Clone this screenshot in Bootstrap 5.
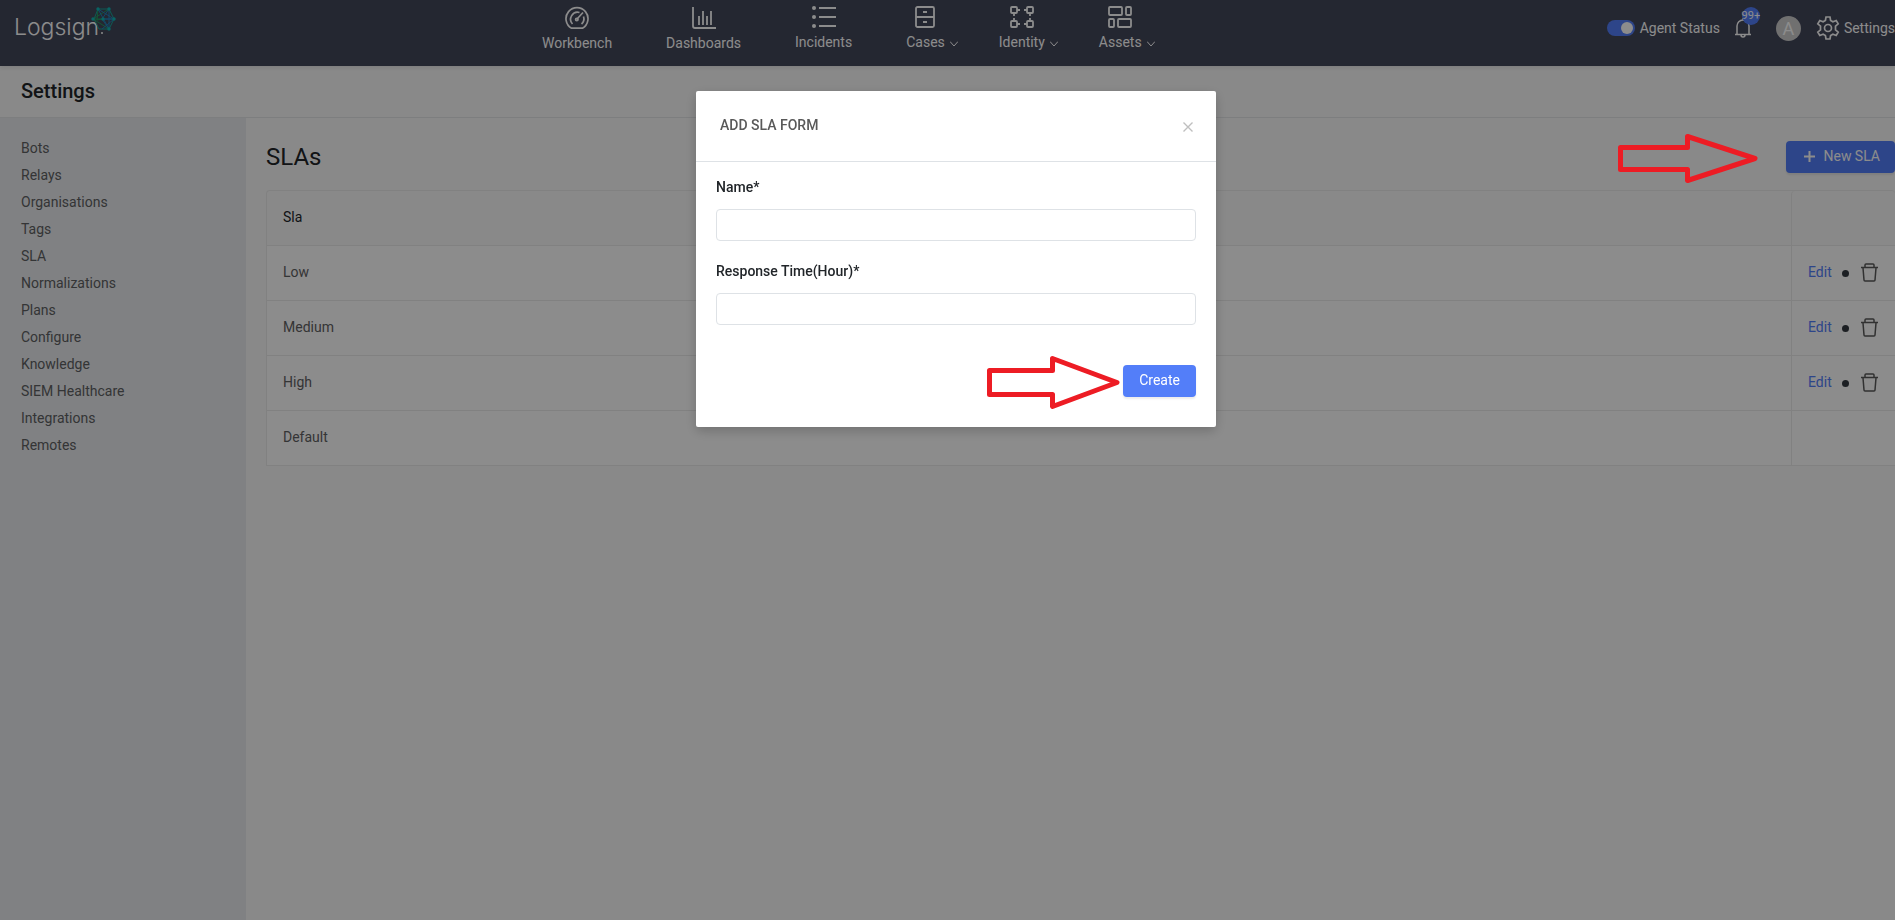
<!DOCTYPE html>
<html lang="en">
<head>
<meta charset="utf-8">
<meta name="viewport" content="width=device-width, initial-scale=1">
<title>Settings - SLAs</title>
<link href="https://cdn.jsdelivr.net/npm/bootstrap@5.3.0/dist/css/bootstrap.min.css" rel="stylesheet">
<style>
body{font-family:Roboto,"Open Sans",sans-serif;font-size:14px;line-height:20px;background:#f9f9f9;color:#212529;overflow-x:hidden}
a{text-decoration:none}
svg{display:block;fill:none;stroke:currentColor;flex-shrink:0}
.topbar{background:#43475a;color:#fff;height:66px;box-shadow:0 2px 4px rgba(0,0,0,.08);position:relative;white-space:nowrap}
.topbar a{color:#fff}
.brand-link{width:118px;padding:4px 0 0 14px}
.wordmark{font-family:Inter,Lato,sans-serif;font-weight:300;font-size:23px;fill:#fff;stroke:none}
.main-menu{padding:4px 0 0 424px;gap:54px}
.menu-item{display:flex;flex-direction:column;align-items:center;gap:4px}
.menu-item .caret{margin:4px -13px 0 5px}
.menu-main{padding-top:2px;gap:3px}
.user-area{margin:15px 0 0 auto;height:26px}
.user-area .form-check-input{width:28px;height:16px;margin:0 5px 0 0;border:0;background-color:#537ef9;box-shadow:none}
.notif{position:relative;margin-left:15px}
.notif-count{position:absolute;left:7px;top:-11px;width:18px;height:18px;border-radius:50%;background:#537ef9;font-size:11px;line-height:18px;display:flex;justify-content:center}
.avatar{width:25px;height:25px;line-height:25px;margin:0 15px 0 25px;background:#ccc;font-size:18px;border-radius:50%;text-align:center}
.title-bar{border-bottom:1px solid #e4e6e8;padding:12px 21px 13px}
.title-bar h1{font-size:20px;line-height:26px;font-weight:500;margin:0}
.shell{min-height:calc(100vh - 118px)}
.side{width:246px;background:#e9ecef;padding:17px 21px}
.side a{color:#5f6163;line-height:27px}
.content{padding:22px 0 0 20px;min-width:0}
.content h2{font-size:24px;line-height:34px;font-weight:400;margin:0}
.btn-blue,.btn-blue:hover{background:#537ef9;color:#fff;border:0;font-size:14px;line-height:20px;height:32px;padding:5px 16px 7px;border-radius:4px;box-shadow:0 2px 2px rgba(0,0,0,.08)}
.btn-blue.new-sla{padding:5px 15px 7px 18px}
.sla-table{margin:16px 0 0;border-collapse:separate;border-spacing:0;border:1px solid #ebebeb;border-width:1px 0 0 1px;border-radius:4px 4px 0 0}
.sla-table>*>tr>*{height:55px;padding:0 16px 2px;font-weight:400;vertical-align:middle;border-bottom:1px solid #ebebeb;color:#5f6163;background:#fff}
.sla-table>thead>tr>*{background:#f9f9f9;color:#212529;border-radius:4px 4px 0 0}
.sla-table>*>tr>.acts{width:104px;border-left:1px solid #ebebeb}
.sla-table .acts a{color:#537ef9}
.sep{width:7px;height:7px;border-radius:50%;background:#343a40;margin:2px 12px 0 10px}
.trash{border:0;background:none;padding:0;color:#5a5a5a}
.modal-backdrop{--bs-backdrop-opacity:.45}
.modal.with-gutter{padding-left:17px}
.modal-dialog{width:520px;max-width:100%;margin-top:91px}
.modal-content{border:0;border-radius:2px;box-shadow:0 4px 12px rgba(0,0,0,.2)}
.modal-header{padding:24px 24px 26px;border-bottom:1px solid #dee2e6;align-items:flex-start}
.modal-title{font-size:14px;line-height:20px;font-weight:500;color:#595959}
.close-x{border:0;background:none;padding:7px 0 0;color:#bfbfbf;margin-right:-1px}
.modal-body{padding:15px 20px 30px}
.modal-body .form-label{font-weight:500;margin:0 0 12px;display:block}
.modal-body .form-control{height:32px;padding:4px 11px;border:1px solid #dee2e6;border-radius:4px;font-size:14px;margin-bottom:20px;box-shadow:none}
.form-actions{padding-top:20px;position:relative}
.pointer{position:absolute;stroke:#ed1c24;stroke-width:5;stroke-linejoin:round;pointer-events:none}
.pointer-create{right:76px;top:10px}
.pointer-new{z-index:1060;right:135px;top:132px}
</style>
</head>
<body>
<svg class="d-none" aria-hidden="true">
  <symbol id="chevron" viewBox="0 0 8 6"><path d="M0 .5 4 5 8 .5" fill="none" stroke="currentColor"/></symbol>
  <symbol id="bin" viewBox="0 0 17 19"><path d="M0 4.500h17M4 4V2q0-1 1-1h7q1 0 1 1v2M2 5l1 12q0 1 1 1h9q1 0 1-1l1-12" fill="none" stroke="currentColor" stroke-width="1.500"/></symbol>
</svg>
<header class="topbar d-flex align-items-start">
  <a href="#" class="brand-link" aria-label="Logsign">
    <svg width="104" height="42" viewBox="0 0 104 42">
      <text class="wordmark" x="0" y="31">Logsign</text>
      <circle cx="88" cy="29" r="1" fill="#fff" stroke="none"/>
      <path d="M84 5h11l5 10-5 10H85l-5-10z" stroke="#18a79b"/>
      <path stroke="#249d62" d="M79 15 95 5M84 5l-1 11 5-1M79 15h9M79 15l16 10"/>
      <path stroke="#2385be" d="M95 5v20M84 5l16 10H88M88 15l12 0M84 5l11 20M95 5 88 15M88 15l7 10M88 25l12-10"/>
      <g fill="#0fb5b5" stroke="none"><circle cx="84" cy="5" r="1.700"/><circle cx="95" cy="5" r="1.700"/><circle cx="100" cy="15" r="1.700"/><circle cx="95" cy="25" r="1.700"/><circle cx="79" cy="15" r="1.700"/><circle cx="89" cy="15" r="1.700"/></g>
    </svg>
  </a>
  <nav class="main-menu d-flex align-items-start" aria-label="Main">
    <a href="#" class="menu-item menu-main"><svg width="24" height="24" viewBox="0 0 24 24" stroke-width="1.700"><path d="M6.500 22.200a11 11 0 1 1 11 0z"/><path d="M7.500 18a7 7 0 0 1 7-11.500M18.500 10.500a7 7 0 0 1-2 7.500M12 13l6-6.500"/><circle cx="11.800" cy="13.500" r="1.200"/></svg><span>Workbench</span></a>
    <a href="#" class="menu-item menu-main"><svg width="24" height="24" viewBox="0 0 24 24" stroke-width="1.800"><path d="M1 1v19q0 2 2 2h21M7 19v-9M11 19V5M15 19v-9M19 19V5"/></svg><span>Dashboards</span></a>
    <a href="#" class="menu-item"><svg width="24" height="24" viewBox="0 0 24 24" stroke-width="2"><path d="M7 4h17M7 13h17M7 22h17"/><g fill="currentColor" stroke="none"><circle cx="2" cy="4" r="2"/><circle cx="2" cy="13" r="2"/><circle cx="2" cy="22" r="2"/></g></svg><span>Incidents</span></a>
    <a href="#" class="menu-item"><svg width="24" height="24" viewBox="0 0 24 24" stroke-width="1.800"><rect x="3" y="3" width="18" height="20" rx="1.500"/><path d="M3 13h18M10 8h4M10 18h4"/></svg><span class="d-flex align-items-center">Cases<svg class="caret" width="8" height="6"><use href="#chevron"/></svg></span></a>
    <a href="#" class="menu-item"><svg width="24" height="24" viewBox="0 0 24 24" stroke-width="1.800"><rect x="1" y="3" width="6" height="6" rx="1"/><rect x="17" y="3" width="6" height="6" rx="1"/><rect x="1" y="17" width="6" height="6" rx="1"/><rect x="17" y="17" width="6" height="6" rx="1"/><path d="M7 6h3M14 6h3M7 20h3M14 20h3M4 9v3M4 14v3M20 9v3M20 14v3"/></svg><span class="d-flex align-items-center">Identity<svg class="caret" width="8" height="6"><use href="#chevron"/></svg></span></a>
    <a href="#" class="menu-item"><svg width="24" height="24" viewBox="0 0 24 24" stroke-width="1.800"><rect x="1" y="3" width="13" height="8" rx="1"/><rect x="18" y="3" width="5" height="8" rx="1"/><rect x="1" y="15" width="5" height="8" rx="1"/><rect x="10" y="15" width="13" height="8" rx="1"/></svg><span class="d-flex align-items-center">Assets<svg class="caret" width="8" height="6"><use href="#chevron"/></svg></span></a>
  </nav>
  <div class="user-area d-flex align-items-center">
    <div class="form-switch d-flex align-items-center p-0">
      <input class="form-check-input" type="checkbox" role="switch" id="agent" checked>
      <label for="agent">Agent Status</label>
    </div>
    <a href="#" class="notif" aria-label="Notifications"><svg width="16" height="20" viewBox="0 0 16 20" stroke-width="1.500"><path d="M0 16.500h16M2 16V8a6 6 0 0 1 12 0v8M6 17q0 2 2 2t2-2M8 0v2"/></svg><span class="notif-count">99+</span></a>
    <span class="avatar">A</span>
    <a href="#" class="d-flex align-items-center"><svg class="me-1" width="24" height="24" viewBox="0 0 24 24" stroke-width="1.700"><path d="M10 1h4l.6 3.400 2.300 1.300 3.300-1.200 2 3.400-2.700 2.300v3.600l2.700 2.300-2 3.400-3.300-1.200-2.300 1.300L14 23h-4l-.6-3.400-2.300-1.300-3.300 1.200-2-3.400 2.700-2.300v-3.600L1.800 7.900l2-3.400 3.300 1.200 2.300-1.300z"/><circle cx="12" cy="12" r="3.500"/></svg>Settings</a>
  </div>
</header>
<div class="title-bar"><h1>Settings</h1></div>
<div class="shell d-flex">
  <nav class="side flex-shrink-0 nav flex-column" aria-label="Settings">
    <a href="#">Bots</a><a href="#">Relays</a><a href="#">Organisations</a><a href="#">Tags</a><a href="#">SLA</a><a href="#">Normalizations</a><a href="#">Plans</a><a href="#">Configure</a><a href="#">Knowledge</a><a href="#">SIEM Healthcare</a><a href="#">Integrations</a><a href="#">Remotes</a>
  </nav>
  <main class="content flex-grow-1">
    <div class="d-flex justify-content-between align-items-center">
      <h2>SLAs</h2>
      <button type="button" class="btn btn-blue new-sla d-flex align-items-center"><svg width="11" height="11" class="me-2" viewBox="0 0 11 11" stroke-width="2"><path d="M5.500 0v11M0 5.500h11"/></svg><span>New SLA</span></button>
    </div>
    <table class="table sla-table">
      <thead><tr><th scope="col">Sla</th><th class="acts"></th></tr></thead>
      <tbody>
        <tr><td>Low</td><td class="acts"><div class="d-flex align-items-center"><a href="#">Edit</a><span class="sep"></span><button type="button" class="trash" aria-label="Delete Low"><svg width="17" height="19"><use href="#bin"/></svg></button></div></td></tr>
        <tr><td>Medium</td><td class="acts"><div class="d-flex align-items-center"><a href="#">Edit</a><span class="sep"></span><button type="button" class="trash" aria-label="Delete Medium"><svg width="17" height="19"><use href="#bin"/></svg></button></div></td></tr>
        <tr><td>High</td><td class="acts"><div class="d-flex align-items-center"><a href="#">Edit</a><span class="sep"></span><button type="button" class="trash" aria-label="Delete High"><svg width="17" height="19"><use href="#bin"/></svg></button></div></td></tr>
        <tr><td>Default</td><td class="acts"></td></tr>
      </tbody>
    </table>
  </main>
</div>
<div class="modal-backdrop show"></div>
<div class="modal with-gutter d-block" tabindex="-1" role="dialog" aria-modal="true" aria-labelledby="sla-title">
  <div class="modal-dialog">
    <form class="modal-content">
      <div class="modal-header">
        <h2 class="modal-title" id="sla-title">ADD SLA FORM</h2>
        <button type="button" class="close-x" aria-label="Close"><svg width="10" height="10" viewBox="0 0 10 10" stroke-width="1.400"><path d="m.5.5 9 9M9.500.5l-9 9"/></svg></button>
      </div>
      <div class="modal-body">
        <label class="form-label" for="name">Name*</label>
        <input class="form-control" type="text" id="name">
        <label class="form-label" for="hours">Response Time(Hour)*</label>
        <input class="form-control" type="text" id="hours">
        <div class="form-actions d-flex justify-content-end">
          <svg class="pointer pointer-create" width="134" height="56" viewBox="0 0 134 56" aria-hidden="true"><path d="M3.500 15.500h63v-12l64.500 24-64.500 24v-12h-63z"/></svg>
          <button type="submit" class="btn btn-blue">Create</button>
        </div>
      </div>
    </form>
  </div>
</div>
<svg class="pointer pointer-new" width="144" height="53" viewBox="0 0 144 53" aria-hidden="true"><path d="M4.500 15.500h67v-11L139 26.500 71.500 48.500v-11h-67z"/></svg>
<script src="https://cdn.jsdelivr.net/npm/bootstrap@5.3.0/dist/js/bootstrap.bundle.min.js"></script>
</body>
</html>
